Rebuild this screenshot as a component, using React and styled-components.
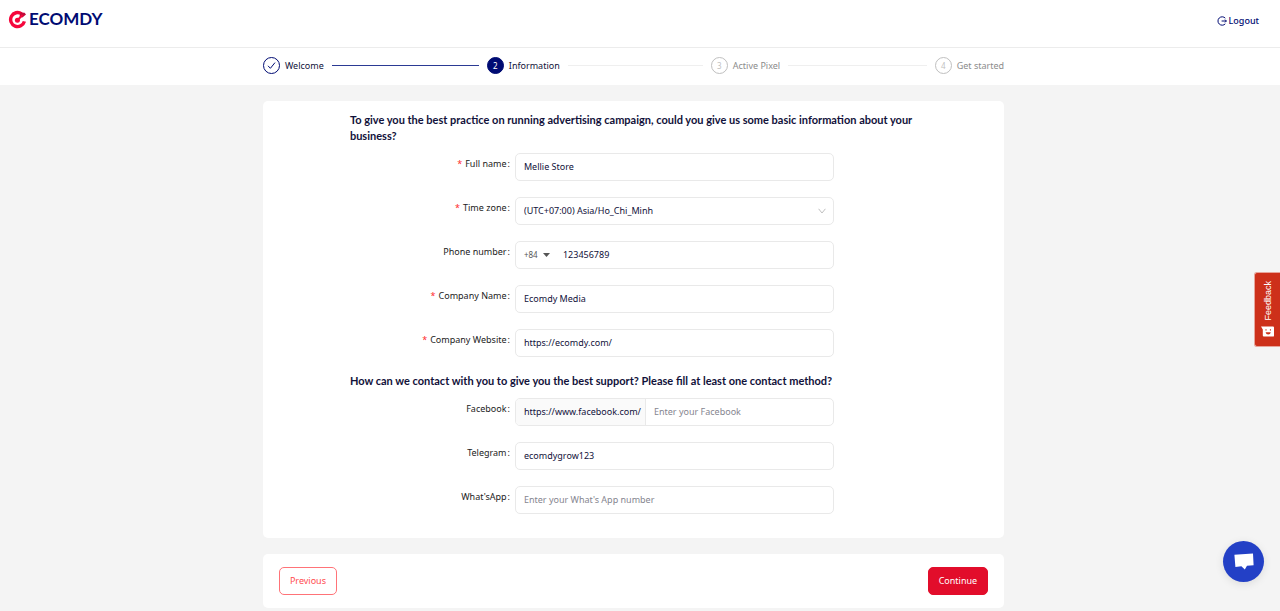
import React, { useState } from 'react';
import styled, { createGlobalStyle } from 'styled-components';

const steps = [
	{ title: 'Welcome', status: 'done' },
	{ title: 'Information', status: 'active' },
	{ title: 'Active Pixel', status: 'wait' },
	{ title: 'Get started', status: 'wait' }
];

const Logo = () => (
	<Brand href="#home" aria-label="Ecomdy home">
		<svg width="19" height="19" viewBox="0 0 19 19" fill="none">
			<path d="M13.6 3.8A7 7 0 1 0 16.4 11.4" stroke="#f5073c" strokeWidth="3.4" />
			<path d="M12.6 2.4L16.6 2.8L18 4.6L14.4 7.4L11.4 6.4Z" fill="#c00a3a" />
			<path d="M9.6 10L14.6 5" stroke="#f5073c" strokeWidth="2" />
			<circle cx="9.4" cy="10.2" r="2.5" fill="#f5073c" />
		</svg>
		<span>ECOMDY</span>
	</Brand>
);

const Steps = () => (
	<StepBar>
		<StepList>
			{steps.map((step, index) => (
				<Step key={step.title} $status={step.status}>
					<StepIcon $status={step.status}>
						{step.status === 'done' ? (
							<svg width="9" height="9" viewBox="0 0 9 9" fill="none" stroke="currentColor">
								<path d="M1 4.8L3.4 7.3L8 1.6" />
							</svg>
						) : (
							index + 1
						)}
					</StepIcon>
					<span>{step.title}</span>
					{index < steps.length - 1 && <StepLine $status={step.status} />}
				</Step>
			))}
		</StepList>
	</StepBar>
);

const Field = ({ id, label, required, children }) => (
	<Row>
		<Label htmlFor={id}>
			{required && <Star>*</Star>}
			{label}
			<Colon>:</Colon>
		</Label>
		{children}
	</Row>
);

const App = () => {
	const [ form, setForm ] = useState({
		fullName: 'Mellie Store',
		phone: '123456789',
		company: 'Ecomdy Media',
		website: 'https://ecomdy.com/',
		facebook: '',
		telegram: 'ecomdygrow123',
		whatsapp: ''
	});

	const bind = (name) => ({
		id: name,
		value: form[name],
		onChange: (e) => setForm({ ...form, [name]: e.target.value })
	});

	return (
		<Page>
			<GlobalStyle />
			<Header>
				<Logo />
				<Logout href="#logout">
					<svg width="10" height="10" viewBox="0 0 10 10" fill="none" stroke="currentColor">
						<path d="M8.3 2.2A4.2 4.2 0 1 0 8.3 7.8M4.6 5H9.4M8 3.6L9.4 5L8 6.4" />
					</svg>
					Logout
				</Logout>
			</Header>
			<Steps />
			<Main>
				<FormCard>
					<Title>
						To give you the best practice on running advertising campaign, could you give us some basic
						information about your business?
					</Title>
					<Rows>
						<Field id="fullName" label="Full name" required>
							<Input {...bind('fullName')} />
						</Field>
						<Field id="timezone" label="Time zone" required>
							<Control>
								<Select id="timezone">
									<option>(UTC+07:00) Asia/Ho_Chi_Minh</option>
								</Select>
								<Chevron width="8" height="6" viewBox="0 0 8 6" fill="none" stroke="#bfbfbf">
									<path d="M0.6 0.8L4 5L7.4 0.8" />
								</Chevron>
							</Control>
						</Field>
						<Field id="phone" label="Phone number">
							<Control>
								<CodePicker>
									<CodeSelect aria-label="Country code">
										<option>+84</option>
									</CodeSelect>
									<svg width="7" height="4" viewBox="0 0 7 4">
										<path d="M0 0H7L3.5 4Z" fill="#555" />
									</svg>
								</CodePicker>
								<BareInput type="tel" {...bind('phone')} />
							</Control>
						</Field>
						<Field id="company" label="Company Name" required>
							<Input {...bind('company')} />
						</Field>
						<Field id="website" label="Company Website" required>
							<Input {...bind('website')} />
						</Field>
					</Rows>
					<Title>
						How can we contact with you to give you the best support? Please fill at least one contact
						method?
					</Title>
					<Rows>
						<Field id="facebook" label="Facebook">
							<Control>
								<Addon>https://www.facebook.com/</Addon>
								<BareInput placeholder="Enter your Facebook" {...bind('facebook')} />
							</Control>
						</Field>
						<Field id="telegram" label="Telegram">
							<Input {...bind('telegram')} />
						</Field>
						<Field id="whatsapp" label="What'sApp">
							<Input placeholder="Enter your What's App number" {...bind('whatsapp')} />
						</Field>
					</Rows>
				</FormCard>
				<Actions>
					<Button type="button">Previous</Button>
					<Button type="button" $primary>
						Continue
					</Button>
				</Actions>
			</Main>
			<Feedback type="button">
				<span>Feedback</span>
				<svg width="13" height="11" viewBox="0 0 13 11">
					<path d="M0 0.4L12 0.6Q13 0.6 13 1.6V9.4Q13 10.6 12 10.6H2.8Q1.8 10.6 1.8 9.6V3.4Z" fill="#fff" />
					<path d="M5 3.2V4.6M9.4 3.2V4.6" stroke="#cd301a" />
					<path d="M4.6 6.2H9.8Q9.4 8.4 7.2 8.4Q5 8.4 4.6 6.2Z" fill="#cd301a" />
				</svg>
			</Feedback>
			<Chat type="button" aria-label="Open chat">
				<svg width="20" height="17" viewBox="0 0 20 17" fill="#fff">
					<path d="M0.4 1.8L19 0.4L19.6 12.2L13 12.8L10.8 16.4L7.4 13.3L1.4 13.9Z" />
				</svg>
			</Chat>
		</Page>
	);
};

export default App;

const navy = '#000b73';
const ink = '#11113a';

const GlobalStyle = createGlobalStyle`
	* {
		box-sizing: border-box;
	}
	body {
		margin: 0;
		background: #f4f4f4;
		color: ${ink};
		font-family: "Noto Sans", sans-serif;
		font-size: 9px;
		line-height: 16px;
	}
	button, input, select {
		font: inherit;
		color: inherit;
	}
`;

const Page = styled.div`
	min-height: 100vh;
`;

const Header = styled.header`
	display: flex;
	justify-content: space-between;
	align-items: flex-start;
	height: 48px;
	padding: 9px 21px 0 8px;
	background: #fff;
	border-bottom: 1px solid #ececec;
`;

const Brand = styled.a`
	display: flex;
	align-items: center;
	gap: 2px;
	height: 20px;
	color: ${navy};
	font-family: Lato, sans-serif;
	font-size: 17px;
	font-weight: 700;
	text-decoration: none;
`;

const Logout = styled.a`
	display: flex;
	align-items: center;
	gap: 2px;
	height: 24px;
	color: ${navy};
	font-weight: 500;
	text-decoration: none;
`;

const StepBar = styled.nav`
	padding: 9px 13px 11px 0;
	background: #fff;
`;

const StepList = styled.ol`
	display: flex;
	gap: 8px;
	width: 58.5%;
	margin: 0 auto;
	padding: 0;
	list-style: none;
`;

const Step = styled.li`
	display: flex;
	align-items: center;
	flex: 1;
	color: ${(p) => (p.$status === 'wait' ? '#8c8c8c' : ink)};
	white-space: nowrap;
	&:last-child {
		flex: none;
	}
`;

const StepIcon = styled.span`
	display: flex;
	align-items: center;
	justify-content: center;
	width: 17px;
	height: 17px;
	margin-right: 5px;
	border: 1px solid ${(p) => (p.$status === 'wait' ? '#bfbfbf' : navy)};
	border-radius: 50%;
	background: ${(p) => (p.$status === 'active' ? navy : '#fff')};
	color: ${(p) => (p.$status === 'active' ? '#fff' : p.$status === 'done' ? navy : '#bfbfbf')};
	font-size: 8px;
`;

const StepLine = styled.span`
	flex: 1;
	height: 1px;
	margin-left: 8px;
	background: ${(p) => (p.$status === 'done' ? '#2b3a94' : '#efefef')};
`;

const Main = styled.main`
	display: flex;
	flex-direction: column;
	align-items: center;
	gap: 16px;
	padding: 16px 13px 3px 0;
`;

const Card = styled.section`
	width: 58.5%;
	background: #fff;
	border-radius: 5px;
`;

const FormCard = styled(Card)`
	display: flex;
	flex-direction: column;
	padding: 11px 87px 8px;
`;

const Title = styled.h2`
	margin: 0 0 9px;
	font-family: Lato, sans-serif;
	font-size: 11px;
	font-weight: 700;
	line-height: 16px;
`;

const Rows = styled.div`
	display: flex;
	flex-direction: column;
	gap: 16px;
	padding-bottom: 16px;
`;

const Row = styled.div`
	display: grid;
	grid-template-columns: 165fr 319fr 83fr;
	height: 28px;
`;

const Label = styled.label`
	padding: 3px 5px 0 0;
	color: #222;
	text-align: right;
`;

const Star = styled.span`
	margin-right: 3px;
	color: #ff2a2d;
`;

const Colon = styled.span`
	margin-left: 1px;
`;

const Control = styled.div`
	position: relative;
	display: flex;
	align-items: stretch;
	min-width: 0;
	border: 1px solid #e9e9e9;
	border-radius: 5px;
	background: #fff;
	overflow: hidden;
`;

const BareInput = styled.input`
	flex: 1;
	min-width: 0;
	padding: 0 8px;
	border: 0;
	outline: none;
	background: transparent;
	&::placeholder {
		color: #85858f;
		opacity: 1;
	}
`;

const Input = styled(BareInput)`
	border: 1px solid #e9e9e9;
	border-radius: 5px;
`;

const Select = styled.select`
	flex: 1;
	padding: 0 8px;
	border: 0;
	outline: none;
	appearance: none;
	background: transparent;
`;

const Chevron = styled.svg`
	align-self: center;
	margin-right: 7px;
`;

const CodePicker = styled.div`
	display: flex;
	align-items: center;
	gap: 5px;
	padding: 0 5px 0 8px;
`;

const CodeSelect = styled.select`
	padding: 0;
	border: 0;
	outline: none;
	appearance: none;
	background: transparent;
	color: #555;
	font-size: 8px;
`;

const Addon = styled.span`
	display: flex;
	align-items: center;
	padding: 0 4px 0 8px;
	border-right: 1px solid #e9e9e9;
	background: #fafafa;
`;

const Actions = styled(Card)`
	display: flex;
	justify-content: space-between;
	padding: 13px 16px;
`;

const Button = styled.button`
	height: 28px;
	padding: 0 10px;
	border: 1px solid ${(p) => (p.$primary ? '#e20d2b' : '#ff7378')};
	border-radius: 5px;
	background: ${(p) => (p.$primary ? '#e20d2b' : '#fff')};
	color: ${(p) => (p.$primary ? '#fff' : '#ff4d4f')};
	cursor: pointer;
`;

const Feedback = styled.button`
	position: fixed;
	top: 272px;
	right: 0;
	display: flex;
	flex-direction: column;
	align-items: center;
	justify-content: space-between;
	width: 26px;
	height: 75px;
	padding: 8px 0 9px;
	border: 1px solid #e8a59b;
	border-right: 0;
	border-radius: 3px 0 0 3px;
	background: #cd301a;
	color: #fff;
	font-family: "Liberation Sans", sans-serif;
	cursor: pointer;
	span {
		writing-mode: vertical-rl;
		transform: rotate(180deg);
	}
`;

const Chat = styled.button`
	position: fixed;
	right: 16px;
	bottom: 29px;
	display: flex;
	align-items: center;
	justify-content: center;
	width: 41px;
	height: 41px;
	padding: 0;
	border: 0;
	border-radius: 50%;
	background: #2340c6;
	box-shadow: 0 2px 8px rgba(0, 0, 0, .1);
	cursor: pointer;
`;
